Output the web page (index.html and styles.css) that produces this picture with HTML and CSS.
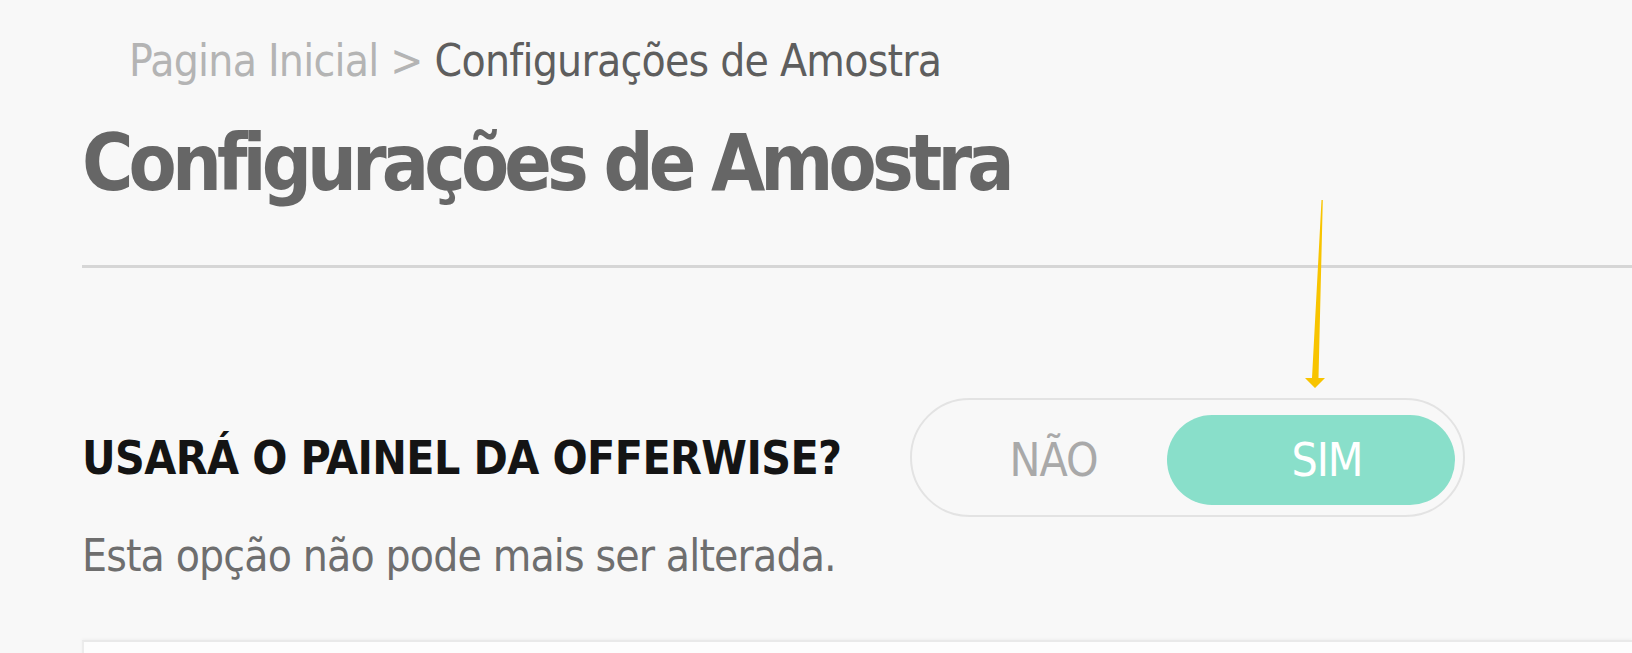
FILE: index.html
```html
<!DOCTYPE html>
<html lang="pt">
<head>
<meta charset="utf-8">
<title>Configurações de Amostra</title>
<link rel="stylesheet" href="styles.css">
</head>
<body>
<main class="page">
  <nav class="breadcrumb"><span class="crumb-muted">Pagina Inicial &gt;</span> <span class="crumb-current">Configurações de Amostra</span></nav>
  <h1 class="title">Configurações de Amostra</h1>
  <hr class="divider">
  <section class="setting">
    <div class="setting-row">
      <h2 class="setting-label">USARÁ O PAINEL DA OFFERWISE?</h2>
      <div class="toggle">
        <span class="toggle-option">NÃO</span>
        <span class="toggle-option toggle-active">SIM</span>
      </div>
    </div>
    <p class="setting-note">Esta opção não pode mais ser alterada.</p>
  </section>
  <div class="panel"></div>
</main>
<svg class="annotation-arrow" width="30" height="200" viewBox="0 0 30 200" aria-hidden="true">
  <polygon points="21.5,5 22.8,5 18.5,183 25,183 15,193 5,183 12,183" fill="#f8c400"/>
</svg>
</body>
</html>
```
FILE: styles.css
```css
html, body {
  margin: 0;
  padding: 0;
  overflow: hidden;
  background: #f8f8f8;
}
body {
  font-family: "DejaVu Sans Condensed", "Liberation Sans", sans-serif;
  position: relative;
  min-height: 653px;
}
.page {
  padding: 36px 0 0 82px;
}
.breadcrumb {
  margin: 0 0 0 47px;
  font-size: 44px;
  line-height: 50px;
  letter-spacing: -0.75px;
  white-space: nowrap;
}
.crumb-muted { color: #b4b4b4; }
.crumb-current { color: #5e5e5e; }
.title {
  margin: 32px 0 0 0;
  font-size: 78px;
  line-height: 90px;
  font-weight: 700;
  letter-spacing: -4.9px;
  color: #666666;
  white-space: nowrap;
}
.divider {
  margin: 57px 0 0 0;
  border: 0;
  height: 3px;
  background: #d6d6d6;
}
.setting {
  margin-top: 130px;
}
.setting-row {
  display: flex;
  align-items: center;
}
.setting-label {
  flex: 0 0 828px;
  margin: 0;
  font-size: 46px;
  line-height: 50px;
  font-weight: 700;
  letter-spacing: -0.6px;
  color: #141414;
  white-space: nowrap;
}
.toggle {
  box-sizing: border-box;
  width: 555px;
  height: 119px;
  border: 2px solid #e3e3e3;
  border-radius: 60px;
  padding: 15px 8px 10px 8px;
  display: flex;
}
.toggle-option {
  flex: 1;
  display: flex;
  align-items: center;
  justify-content: center;
  padding-left: 20px;
  font-size: 46px;
  letter-spacing: -1px;
  color: #a9a9a9;
}
.toggle-active {
  flex: 0 0 288px;
  box-sizing: border-box;
  padding-left: 32px;
  border-radius: 45px;
  background: #89dfca;
  color: #ffffff;
}
.setting-note {
  margin: 14px 0 0 0;
  font-size: 44px;
  line-height: 50px;
  letter-spacing: -0.85px;
  color: #6e6e6e;
  white-space: nowrap;
}
.panel {
  margin-top: 59px;
  height: 120px;
  background: #fdfdfd;
  border-top: 2px solid #e9e9e9;
  border-left: 2px solid #ececec;
  box-shadow: 0 -1px 3px rgba(0,0,0,0.04);
}
.annotation-arrow {
  position: absolute;
  left: 1300px;
  top: 195px;
}
```
